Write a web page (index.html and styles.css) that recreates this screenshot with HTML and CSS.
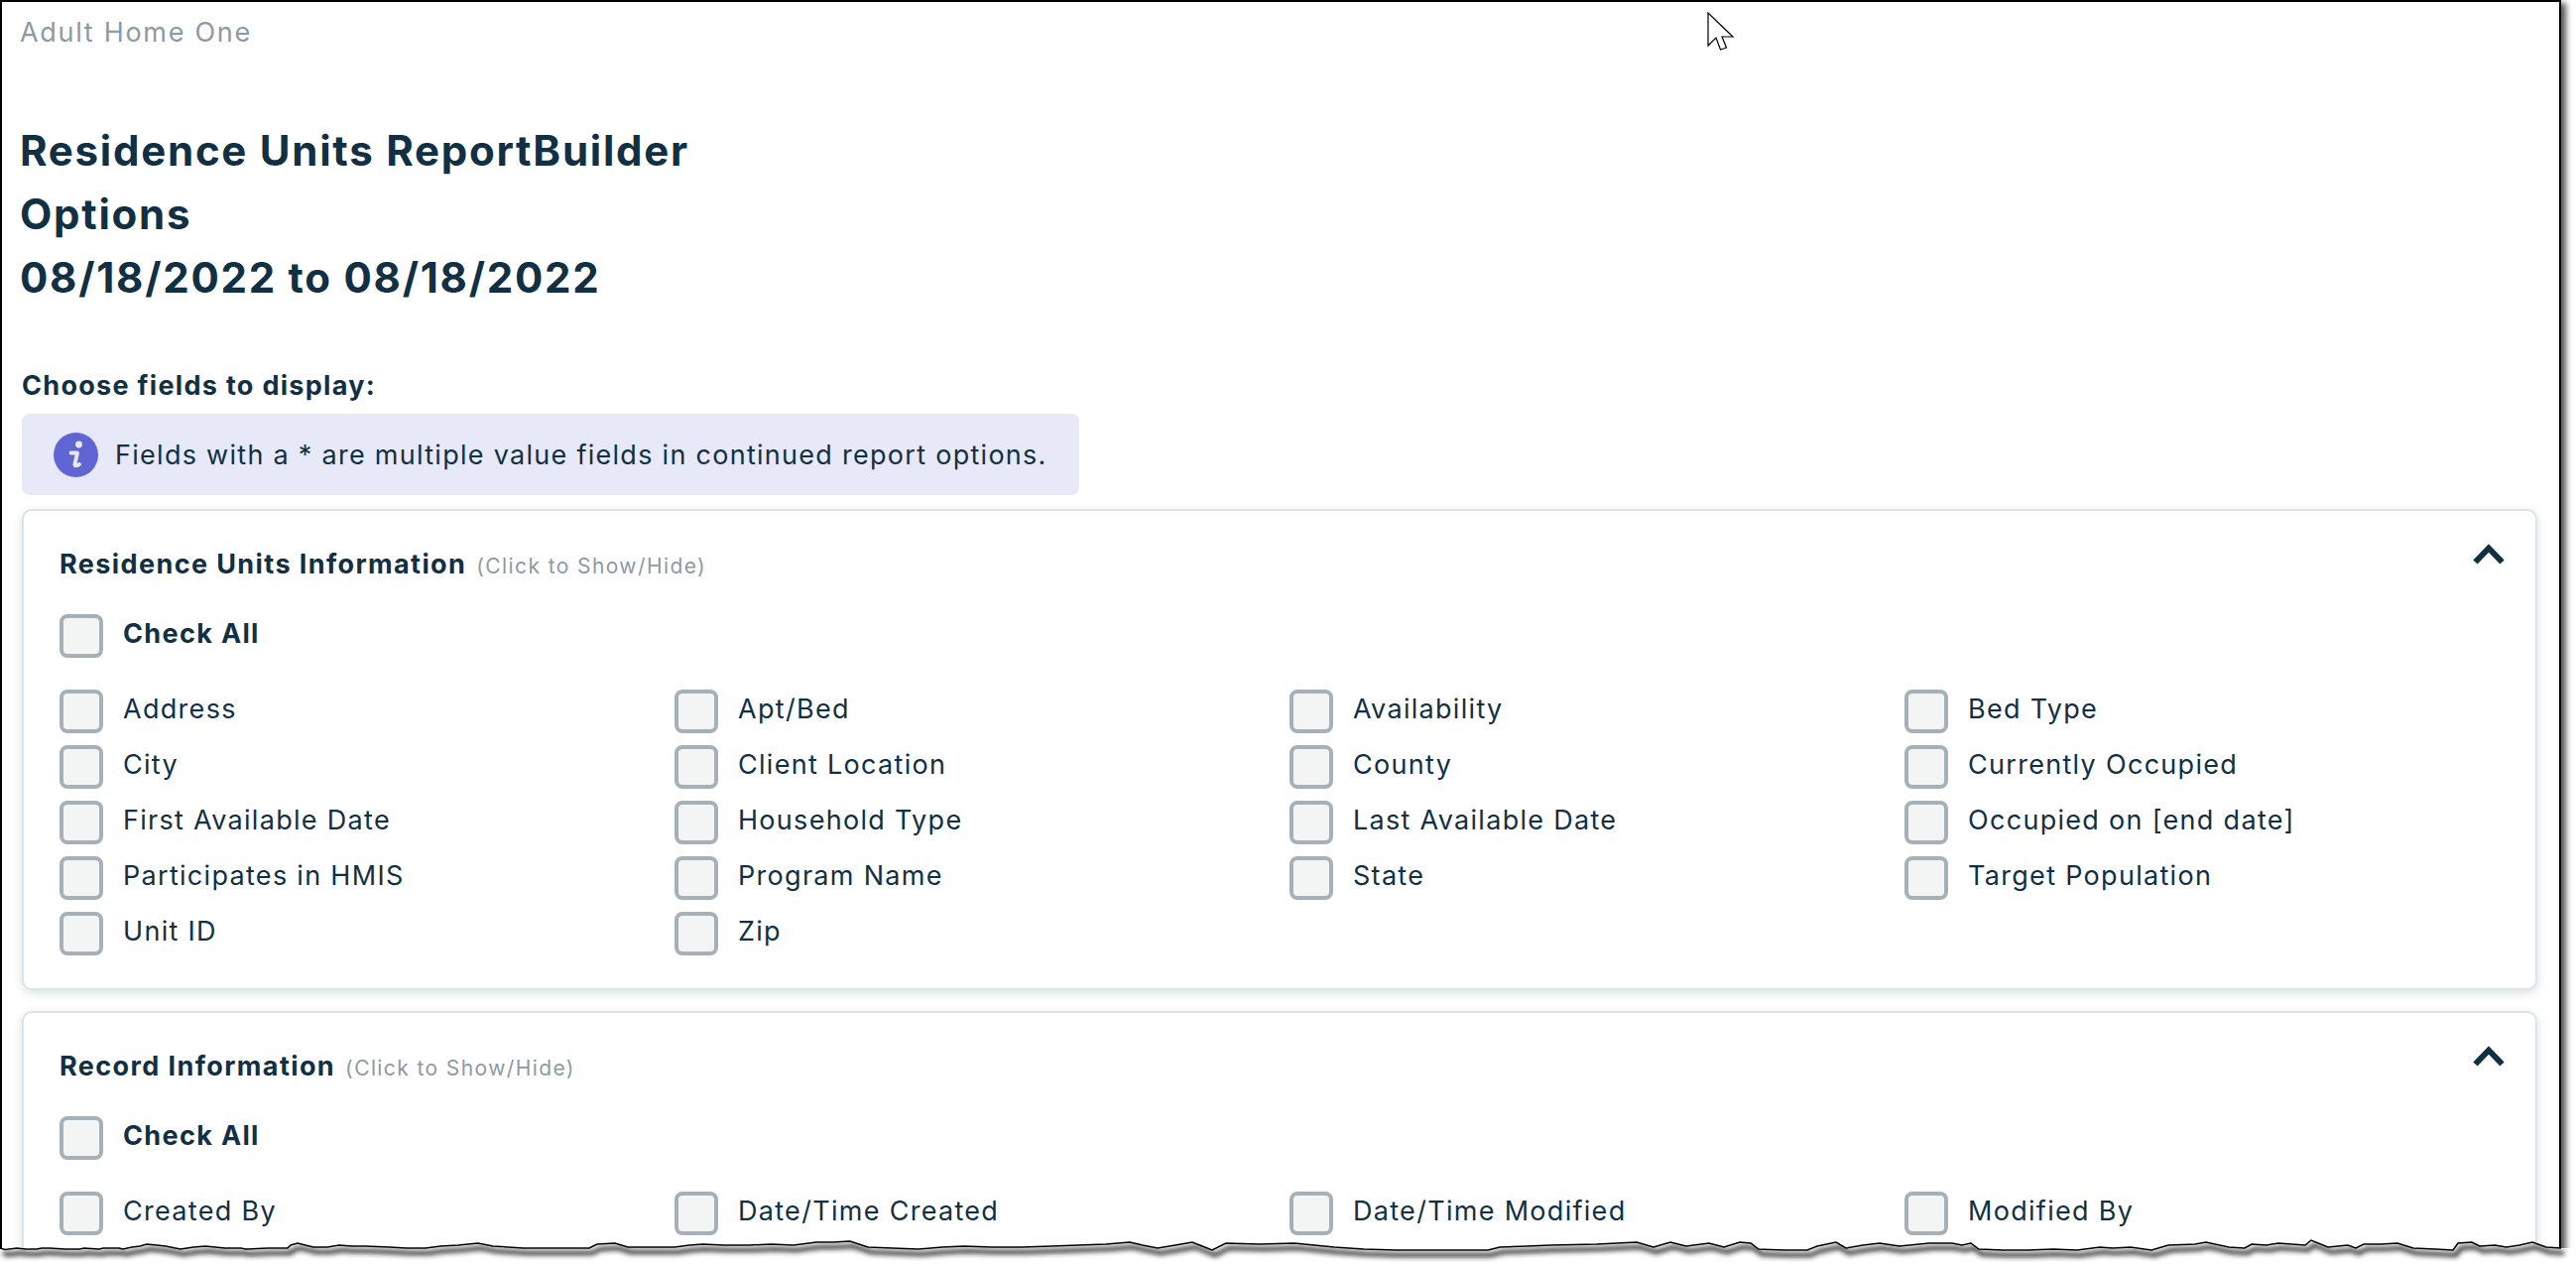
FILE: index.html
```html
<!DOCTYPE html>
<html lang="en">
<head>
<meta charset="utf-8">
<title>Residence Units ReportBuilder Options</title>
<link rel="stylesheet" href="styles.css">
</head>
<body>
<div class="frame">
  <div class="agency">Adult Home One</div>
  <h1 class="title">Residence Units ReportBuilder<br>Options<br>08/18/2022 to 08/18/2022</h1>
  <div class="choose">Choose fields to display:</div>
  <div class="notice">
    <svg class="info" viewBox="0 0 45 45"><circle cx="22.5" cy="22.5" r="22.5" fill="#5f66d3"/><circle cx="25.5" cy="12" r="3.4" fill="#e8e9f8"/><path d="M17.5 20.5h6.5l-2.6 11.5c-.3 1.6 1.2 2 4.6 0" fill="none" stroke="#e8e9f8" stroke-width="3.8" stroke-linecap="round" stroke-linejoin="round"/></svg>
    <span>Fields with a * are multiple value fields in continued report options.</span>
  </div>
  <section class="card">
    <div class="card-head"><strong>Residence Units Information</strong> <small>(Click to Show/Hide)</small>
      <svg class="chev" viewBox="0 0 32 21"><path d="M2.500 18.500 16 4.500l13.500 14" fill="none" stroke="#123044" stroke-width="6"/></svg></div>
    <label class="check all"><i></i>Check All</label>
    <div class="fields">
      <label class="check"><i></i>Address</label><label class="check"><i></i>Apt/Bed</label><label class="check"><i></i>Availability</label><label class="check"><i></i>Bed Type</label>
      <label class="check"><i></i>City</label><label class="check"><i></i>Client Location</label><label class="check"><i></i>County</label><label class="check"><i></i>Currently Occupied</label>
      <label class="check"><i></i>First Available Date</label><label class="check"><i></i>Household Type</label><label class="check"><i></i>Last Available Date</label><label class="check"><i></i>Occupied on [end date]</label>
      <label class="check"><i></i>Participates in HMIS</label><label class="check"><i></i>Program Name</label><label class="check"><i></i>State</label><label class="check"><i></i>Target Population</label>
      <label class="check"><i></i>Unit ID</label><label class="check"><i></i>Zip</label>
    </div>
  </section>
  <section class="card">
    <div class="card-head"><strong>Record Information</strong> <small>(Click to Show/Hide)</small>
      <svg class="chev" viewBox="0 0 32 21"><path d="M2.500 18.500 16 4.500l13.500 14" fill="none" stroke="#123044" stroke-width="6"/></svg></div>
    <label class="check all"><i></i>Check All</label>
    <div class="fields">
      <label class="check"><i></i>Created By</label><label class="check"><i></i>Date/Time Created</label><label class="check"><i></i>Date/Time Modified</label><label class="check"><i></i>Modified By</label>
    </div>
  </section>
</div>
<svg class="cursor" viewBox="0 0 28 40"><path d="M1 1v33l8-8 4.500 12 6-2-4.500-11h11z" fill="#fff" stroke="#000" stroke-width="1.200"/></svg>
<svg class="torn" viewBox="0 1230 2597 46">
  <defs>
    <filter id="tearblur" x="-1%" y="-100%" width="102%" height="300%"><feGaussianBlur stdDeviation="2.500"/></filter>
    <path id="tearline" d="M0 1258 5 1259.500 17 1258 26 1259 37 1259 42 1258 50 1258 66 1259 80 1259 85 1258 100 1259 104 1258 120 1258 124 1259 133 1257 141 1256 148 1254 158 1255 167 1256 182 1259 195 1257 207 1256 217 1257 227 1258 243 1258 248 1259 270 1258 290 1258 293 1255 300 1253 316 1257 330 1257 342 1255 355 1256 368 1256 393 1257 410 1258 429 1258 444 1256 462 1255 482 1253 497 1256 512 1257 528 1258 561 1258 580 1258 594 1258 602 1254 620 1253 633 1257 648 1257 680 1257 695 1255 709 1254 730 1255 755 1255 778 1254 800 1255 823 1252 840 1252 857 1251 875 1257 900 1258 926 1259 950 1257 972 1256 1000 1257 1030 1257 1060 1256 1087 1255 1115 1254 1139 1252 1152 1255 1167 1258 1185 1255 1202 1252 1212 1256 1222 1260 1236 1253 1270 1254 1305 1253 1325 1255 1345 1257 1375 1259 1408 1260 1455 1260 1500 1260 1512 1257 1540 1256 1563 1255 1610 1254 1650 1252 1667 1257 1684 1252 1700 1256 1723 1253 1738 1257 1754 1252 1765 1253 1773 1259 1800 1260 1822 1260 1832 1256 1851 1252 1861 1258 1878 1255 1895 1253 1915 1256 1945 1253 1968 1253 1978 1255 1987 1253 1995 1259 2020 1260 2044 1260 2070 1259 2094 1260 2117 1257 2130 1258 2148 1257 2169 1260 2186 1255 2213 1254 2224 1252 2247 1257 2263 1258 2270 1254 2285 1255 2297 1253 2324 1255 2330 1250 2347 1257 2367 1255 2375 1258 2383 1254 2400 1254 2417 1253 2433 1258 2455 1259 2473 1260 2478 1253 2492 1252 2500 1256 2515 1255 2527 1257 2540 1255 2553 1252 2567 1257 2582 1258"/>
    <path id="teararea" d="M0 1258 5 1259.500 17 1258 26 1259 37 1259 42 1258 50 1258 66 1259 80 1259 85 1258 100 1259 104 1258 120 1258 124 1259 133 1257 141 1256 148 1254 158 1255 167 1256 182 1259 195 1257 207 1256 217 1257 227 1258 243 1258 248 1259 270 1258 290 1258 293 1255 300 1253 316 1257 330 1257 342 1255 355 1256 368 1256 393 1257 410 1258 429 1258 444 1256 462 1255 482 1253 497 1256 512 1257 528 1258 561 1258 580 1258 594 1258 602 1254 620 1253 633 1257 648 1257 680 1257 695 1255 709 1254 730 1255 755 1255 778 1254 800 1255 823 1252 840 1252 857 1251 875 1257 900 1258 926 1259 950 1257 972 1256 1000 1257 1030 1257 1060 1256 1087 1255 1115 1254 1139 1252 1152 1255 1167 1258 1185 1255 1202 1252 1212 1256 1222 1260 1236 1253 1270 1254 1305 1253 1325 1255 1345 1257 1375 1259 1408 1260 1455 1260 1500 1260 1512 1257 1540 1256 1563 1255 1610 1254 1650 1252 1667 1257 1684 1252 1700 1256 1723 1253 1738 1257 1754 1252 1765 1253 1773 1259 1800 1260 1822 1260 1832 1256 1851 1252 1861 1258 1878 1255 1895 1253 1915 1256 1945 1253 1968 1253 1978 1255 1987 1253 1995 1259 2020 1260 2044 1260 2070 1259 2094 1260 2117 1257 2130 1258 2148 1257 2169 1260 2186 1255 2213 1254 2224 1252 2247 1257 2263 1258 2270 1254 2285 1255 2297 1253 2324 1255 2330 1250 2347 1257 2367 1255 2375 1258 2383 1254 2400 1254 2417 1253 2433 1258 2455 1259 2473 1260 2478 1253 2492 1252 2500 1256 2515 1255 2527 1257 2540 1255 2553 1252 2567 1257 2582 1258 2597 1258V1276H0Z"/>
    <clipPath id="tearclip"><use href="#teararea"/></clipPath>
  </defs>
  <use href="#teararea" fill="#fff"/>
  <g clip-path="url(#tearclip)"><use href="#tearline" transform="translate(3 5)" fill="none" stroke="#222" stroke-width="4" filter="url(#tearblur)"/></g>
  <use href="#tearline" fill="none" stroke="#000" stroke-width="1.500"/>
</svg>
</body>
</html>
```
FILE: styles.css
```css
* { box-sizing: border-box; }
html, body { margin: 0; height: 100%; }
body {
  position: relative;
  width: 2597px;
  height: 1276px;
  overflow: hidden;
  background: #fff;
  color: #123044;
  font-family: Inter, "Noto Sans", sans-serif;
}
.frame {
  width: 2582px;
  height: 1276px;
  border: 2px solid #000;
  border-bottom: 0;
  padding: 0 22px 0 18px;
  background: #fff;
  overflow: hidden;
  box-shadow: 5px 3px 6px rgba(0,0,0,.65);
}
.agency {
  font-size: 27px;
  line-height: 34px;
  padding-top: 14px;
  letter-spacing: 1.7px;
  color: #8c9aa4;
}
.title {
  margin: 70px 0 0;
  font-size: 42px;
  line-height: 64px;
  font-weight: 700;
  letter-spacing: 1.75px;
}
.choose {
  margin: 60px 0 0 2px;
  font-size: 27px;
  line-height: 34px;
  font-weight: 700;
  letter-spacing: 1.3px;
}
.notice {
  display: flex;
  align-items: center;
  gap: 17px;
  width: 1066px;
  height: 82px;
  margin: 11px 0 0 2px;
  padding-left: 32px;
  border-radius: 8px;
  background: #e8e9f8;
  font-size: 27px;
  letter-spacing: 1.28px;
}
.info { width: 45px; height: 45px; flex: none; }
.card {
  position: relative;
  height: 485px;
  margin: 14px 0 21px 2px;
  padding: 37px 36px 0;
  border: 2px solid #dde3e6;
  border-radius: 10px;
  background: #fff;
  box-shadow: 0 3px 10px rgba(90,110,120,.22);
}
.card-head {
  height: 34px;
  line-height: 34px;
  font-size: 27px;
  letter-spacing: 1.4px;
}
.card-head small { margin-left: 1px; font-size: 21px; color: #8c9aa4; }
.chev { position: absolute; top: 33px; right: 31px; width: 32px; height: 21px; }
.check {
  display: flex;
  align-items: flex-start;
  gap: 20px;
  height: 44px;
  line-height: 40px;
  font-size: 27px;
  letter-spacing: 1.3px;
}
.check i {
  flex: none;
  width: 44px;
  height: 44px;
  border: 4px solid #a5b0b7;
  border-radius: 8px;
  background: #f3f5f5;
}
.all { margin-top: 33px; font-weight: 700; letter-spacing: 1.35px; }
.fields {
  display: grid;
  grid-template-columns: repeat(4, 620px);
  row-gap: 12px;
  margin-top: 32px;
}
.cursor { position: absolute; left: 1721px; top: 12px; width: 28px; height: 40px; }
.torn { position: absolute; left: 0; top: 1230px; width: 2597px; height: 46px; }
```
